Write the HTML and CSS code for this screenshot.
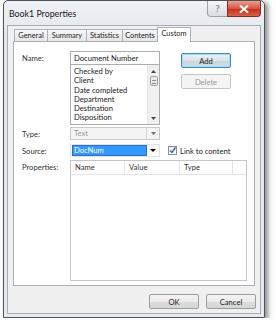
FILE: index.html
```html
<!DOCTYPE html>
<html lang="en">
<head>
    <meta charset="UTF-8">
    <meta name="viewport" content="width=device-width, initial-scale=1.0">
    <title>Book1 Properties</title>
    <link rel="stylesheet" href="styles.css">
</head>
<body>

    <div class="window">
        <div class="titlebar">
            <span class="title">Book1 Properties</span>
            <div class="caption-buttons">
                <span class="cap-help">?</span>
                <span class="cap-close">
                    <svg width="10" height="8" viewBox="0 0 10 8"><path d="M1 0.5 L9 7.5 M9 0.5 L1 7.5" stroke="#fff" stroke-width="2"/></svg>
                </span>
            </div>
        </div>

        <div class="client">
            <div class="tabs">
                <span class="tab t-general">General</span>
                <span class="tab t-summary">Summary</span>
                <span class="tab t-stats">Statistics</span>
                <span class="tab t-contents">Contents</span>
                <span class="tab t-custom active">Custom</span>
            </div>

            <div class="panel">
                <div class="top-row">
                    <label class="lbl">Name:</label>
                    <div class="name-col">
                        <div class="textbox">Document Number</div>
                        <div class="listbox">
                            <ul class="items">
                                <li>Checked by</li>
                                <li>Client</li>
                                <li>Date completed</li>
                                <li>Department</li>
                                <li>Destination</li>
                                <li>Disposition</li>
                            </ul>
                            <div class="vscroll">
                                <svg class="arr" width="5" height="3" viewBox="0 0 5 3"><path d="M0 3 L2.5 0 L5 3 Z" fill="#444"/></svg>
                                <span class="thumb"></span>
                                <span class="spacer"></span>
                                <svg class="arr" width="5" height="3" viewBox="0 0 5 3"><path d="M0 0 L2.5 3 L5 0 Z" fill="#444"/></svg>
                            </div>
                        </div>
                    </div>
                    <div class="side-buttons">
                        <button class="btn btn-default">Add</button>
                        <button class="btn btn-disabled">Delete</button>
                    </div>
                </div>

                <div class="row type-row">
                    <label class="lbl">Type:</label>
                    <div class="combo combo-disabled">
                        <span class="combo-text">Text</span>
                        <span class="combo-drop">
                            <svg width="5" height="3" viewBox="0 0 5 3"><path d="M0 0 L2.5 3 L5 0 Z" fill="#6d6d6d"/></svg>
                        </span>
                    </div>
                </div>

                <div class="row source-row">
                    <label class="lbl">Source:</label>
                    <div class="combo combo-edit">
                        <span class="combo-text"><span class="sel">DocNum</span></span>
                        <span class="combo-drop plain">
                            <svg width="6" height="3" viewBox="0 0 6 3"><path d="M0 0 L3 3 L6 0 Z" fill="#000"/></svg>
                        </span>
                    </div>
                    <span class="checkbox">
                        <svg width="7" height="7" viewBox="0 0 7 7"><path d="M1 3.5 L3 5.5 L6.5 0.5" stroke="#4a5f97" stroke-width="1.4" fill="none"/></svg>
                    </span>
                    <span class="check-label">Link to content</span>
                </div>

                <div class="row props-row">
                    <label class="lbl">Properties:</label>
                    <div class="listview">
                        <div class="lv-header">
                            <span class="col c-name">Name</span>
                            <span class="col c-value">Value</span>
                            <span class="col c-type">Type</span>
                            <span class="col c-rest"></span>
                        </div>
                    </div>
                </div>
            </div>

            <div class="dialog-buttons">
                <button class="btn btn-dlg">OK</button>
                <button class="btn btn-dlg">Cancel</button>
            </div>
        </div>
    </div>

</body>
</html>
```

FILE: styles.css
```css
body {
    margin: 0;
    background-color: #fdfdfd;
    font-family: Lato, "Noto Sans", sans-serif;
    font-size: 7.6px;
    color: #222;
    overflow: hidden;
}

.window {
    box-sizing: border-box;
    width: 262px;
    height: 318px;
    margin-left: 3px;
    border: 1px solid #4f5358;
    border-radius: 5px 5px 0 0;
    background: linear-gradient(#eef1f5, #e3e7ec 40px, #e6e9ee);
    box-shadow: 3px 2px 5px rgba(0, 0, 0, 0.45);
    display: flex;
    flex-direction: column;
}

.titlebar {
    height: 24px;
    display: flex;
    justify-content: space-between;
    align-items: flex-start;
}

.title {
    padding: 7px 0 0 5px;
    font-size: 8.8px;
    color: #1a1a1a;
}

.caption-buttons {
    display: flex;
    margin-right: 3px;
}

.cap-help {
    box-sizing: border-box;
    width: 20px;
    height: 16px;
    border: 1px solid #9aa3ad;
    border-top: none;
    border-right: none;
    border-radius: 0 0 0 4px;
    background: linear-gradient(#f5f6f8, #d9dde2);
    color: #8a8f95;
    font-size: 10px;
    font-weight: bold;
    text-align: center;
    line-height: 15px;
}

.cap-close {
    box-sizing: border-box;
    width: 34px;
    height: 16px;
    border: 1px solid #8a2a22;
    border-top: none;
    border-radius: 0 0 4px 0;
    background: linear-gradient(#e9a190, #d6553f 50%, #c5321f 55%, #d8614a);
    display: flex;
    align-items: center;
    justify-content: center;
}

.client {
    flex: 1;
    margin: 0 3px 3px 3px;
    border: 1px solid #a6acb3;
    background-color: #f0f0f0;
    padding: 1px 5px 0 5px;
    display: flex;
    flex-direction: column;
}

.tabs {
    display: flex;
    align-items: flex-end;
    height: 14px;
    padding-left: 1px;
}

.tab {
    box-sizing: border-box;
    height: 12px;
    border: 1px solid #a9b0b8;
    border-bottom: none;
    margin-right: -1px;
    background: linear-gradient(#f6f6f6, #e6e6e6);
    font-size: 7.4px;
    color: #222;
    text-align: center;
    line-height: 11px;
}

.t-general { width: 34px; }
.t-summary { width: 40px; }
.t-stats { width: 37px; }
.t-contents { width: 36px; }
.t-custom { width: 34px; }

.tab.active {
    height: 15px;
    margin-bottom: -1px;
    background: #fff;
    position: relative;
    line-height: 12px;
    padding-bottom: 2px;
}

.panel {
    box-sizing: border-box;
    height: 245px;
    border: 1px solid #a9b0b8;
    background-color: #fff;
    padding: 9px 0 0 8px;
}

.lbl {
    width: 48px;
    flex-shrink: 0;
    color: #333;
}

.top-row {
    display: flex;
}

.top-row .lbl {
    padding-top: 2px;
}

.name-col {
    width: 90px;
    display: flex;
    flex-direction: column;
}

.textbox {
    box-sizing: border-box;
    height: 14px;
    border: 1px solid #abadb3;
    padding-left: 3px;
    line-height: 12px;
}

.listbox {
    box-sizing: border-box;
    height: 60px;
    border: 1px solid #abadb3;
    border-top: none;
    display: flex;
}

.items {
    flex: 1;
    list-style: none;
    margin: 0;
    padding: 2px 0 0 3px;
    overflow: hidden;
    line-height: 9.3px;
}

.vscroll {
    width: 11px;
    background: #f0f0f0;
    border-left: 1px solid #e6e6e6;
    display: flex;
    flex-direction: column;
    align-items: center;
    padding: 5px 0 4px;
    gap: 3px;
}

.vscroll .spacer {
    flex: 1;
}

.thumb {
    box-sizing: border-box;
    width: 8px;
    height: 10px;
    border: 1px solid #a0a0a0;
    border-radius: 2px;
    background: repeating-linear-gradient(#eaeaea 0 2px, #8c8c8c 2px 3px);
    background-size: 4px 7px;
    background-position: center;
    background-repeat: no-repeat;
    background-color: #ececec;
}

.side-buttons {
    margin-left: 21px;
    padding-top: 2px;
    display: flex;
    flex-direction: column;
    gap: 6px;
}

.btn {
    box-sizing: border-box;
    width: 50px;
    height: 15px;
    padding: 0;
    font-family: Lato, "Noto Sans", sans-serif;
    font-size: 7.6px;
    border-radius: 2px;
    color: #1e1e1e;
}

.btn-default {
    border: 1px solid #3c8fc4;
    background: linear-gradient(#edf3f7, #d8e2ea 50%, #c8d4de 51%, #d3dde6);
    box-shadow: inset 0 0 0 1px #a6d8f3;
}

.btn-disabled {
    border: 1px solid #c3c7ca;
    background: #f4f4f4;
    color: #9a9a9a;
}

.row {
    display: flex;
    align-items: center;
}

.type-row {
    margin-top: 2px;
}

.source-row {
    margin-top: 4px;
}

.props-row {
    margin-top: 3px;
    align-items: flex-start;
}

.props-row .lbl {
    padding-top: 2px;
}

.combo {
    box-sizing: border-box;
    width: 90px;
    height: 13px;
    display: flex;
    align-items: stretch;
}

.combo-disabled {
    border: 1px solid #c9c9c9;
    background: #f4f4f4;
    color: #9b9b9b;
}

.combo-text {
    flex: 1;
    line-height: 11px;
    padding-left: 3px;
}

.combo-drop {
    width: 12px;
    border-left: 1px solid #d6d6d6;
    display: flex;
    align-items: center;
    justify-content: center;
}

.combo-edit {
    border: 1px solid #e2e3e4;
}

.combo-edit .combo-text {
    padding-left: 1px;
    display: flex;
}

.sel {
    flex: 1;
    background: #3399ff;
    color: #fff;
    padding-left: 1px;
    border: 1px solid #2a6fc0;
    line-height: 9px;
}

.combo-drop.plain {
    border-left: none;
}

.checkbox {
    box-sizing: border-box;
    width: 9px;
    height: 9px;
    margin-left: 8px;
    border: 1px solid #8e8f8f;
    background: linear-gradient(#e8ecf2, #fafbfc);
    display: flex;
    align-items: center;
    justify-content: center;
}

.check-label {
    margin-left: 3px;
    color: #222;
}

.listview {
    box-sizing: border-box;
    width: 177px;
    height: 121px;
    border: 1px solid #c4c6c9;
}

.lv-header {
    display: flex;
    height: 13px;
    border-bottom: 1px solid #e5e5e5;
    line-height: 13px;
    color: #333;
}

.col {
    box-sizing: border-box;
    border-right: 1px solid #e3e3e3;
    padding-left: 4px;
}

.c-name { width: 54px; }
.c-value { width: 55px; }
.c-type { width: 53px; }
.c-rest { flex: 1; border-right: none; }

.dialog-buttons {
    display: flex;
    justify-content: flex-end;
    gap: 7px;
    margin-top: 8px;
    margin-right: -1px;
}

.btn-dlg {
    height: 15px;
    border: 1px solid #9d9d9d;
    background: linear-gradient(#f3f3f3, #ebebeb 50%, #dddddd 51%, #d6d6d6);
}
```
